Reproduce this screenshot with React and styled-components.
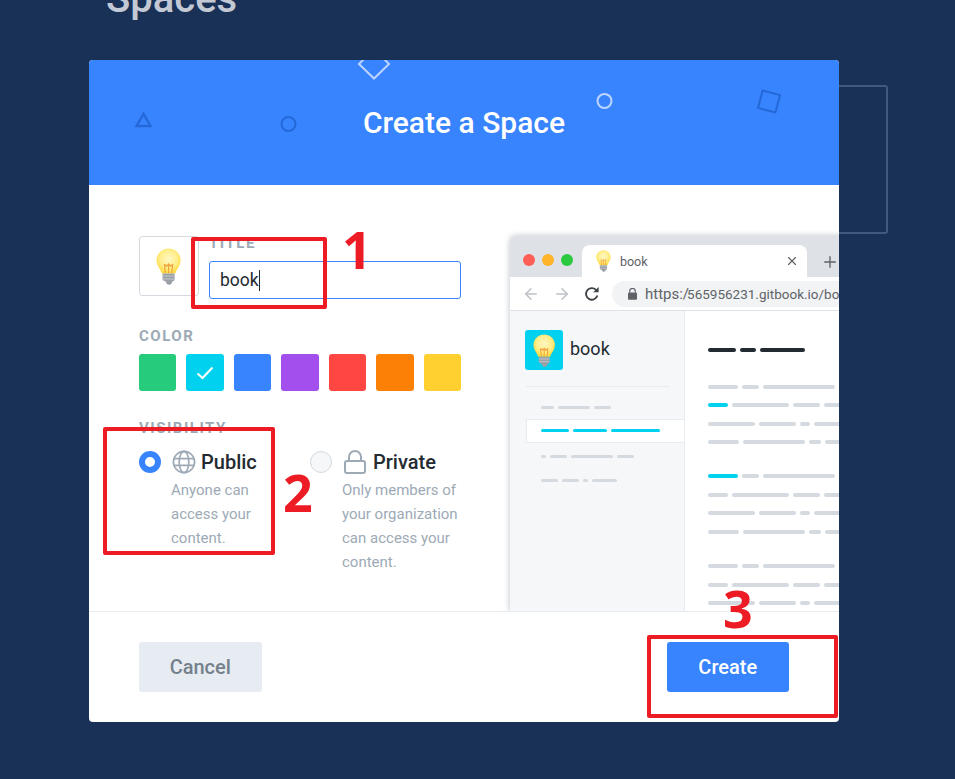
import React from 'react';
import styled, { createGlobalStyle } from 'styled-components';
import { ArrowLeft, ArrowRight, Plus, X } from 'lucide-react';

const GlobalStyle = createGlobalStyle`
  html, body {
    margin: 0;
    padding: 0;
    background: #1a3157;
  }
  body {
    font-family: Roboto, "Liberation Sans", sans-serif;
  }
`;

const Page = styled.div`
  position: relative;
  width: 955px;
  height: 779px;
  overflow: hidden;
  background: #1a3157;
`;

const Backdrop = styled.div`
  padding-left: 106px;
`;

const SpacesTitle = styled.h1`
  margin: -25px 0 0;
  font-size: 40px;
  line-height: 47px;
  font-weight: 500;
  color: #c3c9d4;
`;

const BackCard = styled.div`
  box-sizing: border-box;
  width: 782px;
  height: 149px;
  margin-top: 63px;
  border: 2px solid #42587c;
  border-radius: 3px;
`;

const Modal = styled.div`
  position: absolute;
  left: 89px;
  top: 60px;
  width: 750px;
  height: 662px;
  display: flex;
  flex-direction: column;
  background: #fff;
  border-radius: 4px;
  overflow: hidden;
`;

const Header = styled.header`
  position: relative;
  flex: none;
  height: 125px;
  display: flex;
  align-items: center;
  justify-content: center;
  background: #3884ff;
`;

const HeaderTitle = styled.h2`
  margin: 0;
  font-size: 30px;
  font-weight: 500;
  color: #fff;
`;

const Decor = styled.svg`
  position: absolute;
  left: 0;
  top: 0;
  pointer-events: none;
`;

const Body = styled.div`
  flex: 1;
  display: flex;
  gap: 49px;
  padding: 51px 0 0 50px;
  overflow: hidden;
`;

const FormColumn = styled.div`
  flex: none;
  width: 322px;
`;

const TitleRow = styled.div`
  display: flex;
  gap: 10px;
`;

const IconBox = styled.div`
  box-sizing: border-box;
  flex: none;
  width: 60px;
  height: 60px;
  display: flex;
  align-items: center;
  justify-content: center;
  border: 1px solid #d4dadf;
  border-radius: 3px;
`;

const TitleField = styled.div`
  flex: 1;
`;

const Label = styled.div`
  font-size: 15px;
  line-height: 16px;
  font-weight: 700;
  letter-spacing: 1.5px;
  color: #9daab6;
  margin-top: ${(p) => p.$top || 0}px;
`;

const TitleInput = styled.div`
  box-sizing: border-box;
  height: 38px;
  margin-top: 10px;
  padding: 0 10px;
  display: flex;
  align-items: center;
  border: 1px solid #3884ff;
  border-radius: 3px;
  font-size: 17.5px;
  color: #242a31;
`;

const Caret = styled.span`
  width: 1px;
  height: 21px;
  background: #242a31;
`;

const Swatches = styled.div`
  display: grid;
  grid-template-columns: repeat(7, 1fr);
  gap: 10px;
  margin-top: 10px;
`;

const Swatch = styled.div`
  height: 37px;
  display: flex;
  align-items: center;
  justify-content: center;
  border-radius: 3px;
  background: ${(p) => p.$color};
`;

const Options = styled.div`
  display: flex;
  margin-top: 15px;
`;

const Option = styled.div`
  flex: none;
  width: ${(p) => p.$width}px;
  display: flex;
  gap: 10px;
`;

const Radio = styled.div`
  box-sizing: border-box;
  flex: none;
  width: 22px;
  height: 22px;
  border-radius: 50%;
  border: ${(p) => (p.$checked ? '6px solid #3884ff' : '1px solid #d4dadf')};
  background: ${(p) => (p.$checked ? '#fff' : '#f5f7f9')};
`;

const OptionText = styled.div`
  min-width: 0;
`;

const OptionHead = styled.div`
  display: flex;
  align-items: center;
  gap: 5px;
  height: 22px;
  margin-left: 1px;
  font-size: 20px;
  font-weight: 500;
  color: #242a31;
`;

const OptionDesc = styled.p`
  margin: 5px 0 0;
  font-size: 15px;
  line-height: 24px;
  color: #9daab6;
`;

const Preview = styled.div`
  flex: none;
  width: 400px;
  height: 375px;
  border-radius: 6px 0 0 0;
  overflow: hidden;
  box-shadow: 0 0 6px rgba(60, 75, 100, 0.35);
  background: #fff;
`;

const TabBar = styled.div`
  height: 41px;
  display: flex;
  align-items: flex-end;
  background: #dee1e6;
`;

const Dots = styled.div`
  width: 72px;
  height: 41px;
  display: flex;
  align-items: center;
  gap: 7px;
  padding: 7px 0 0 13px;
  box-sizing: border-box;
`;

const Dot = styled.span`
  width: 12px;
  height: 12px;
  border-radius: 50%;
  background: ${(p) => p.$color};
`;

const Tab = styled.div`
  box-sizing: border-box;
  width: 225px;
  height: 32px;
  display: flex;
  align-items: center;
  gap: 9px;
  padding: 0 8px 0 14px;
  background: #fff;
  border-radius: 8px 8px 0 0;
  font-size: 12.5px;
  color: #5f6368;
`;

const TabTitle = styled.span`
  flex: 1;
`;

const NewTab = styled.div`
  padding: 0 0 6px 14px;
  display: flex;
  color: #5f6368;
`;

const AddressBar = styled.div`
  box-sizing: border-box;
  height: 34px;
  display: flex;
  align-items: center;
  border-bottom: 1px solid #dee1e6;
  padding-left: 12px;
  gap: 13px;
`;

const UrlPill = styled.div`
  flex: none;
  width: 260px;
  height: 26px;
  margin-left: -1px;
  padding-left: 16px;
  display: flex;
  align-items: center;
  gap: 8px;
  white-space: nowrap;
  background: #f1f3f4;
  border-radius: 13px 0 0 13px;
  font-size: 15px;
  color: #5f6368;
`;

const UrlRest = styled.span`
  margin-left: -10px;
  font-size: 13.5px;
`;

const Site = styled.div`
  display: flex;
  height: 300px;
`;

const Sidebar = styled.aside`
  box-sizing: border-box;
  flex: none;
  width: 175px;
  padding: 19px 0 0 15px;
  background: #f5f7f9;
  border-right: 1px solid #e6ecf1;
`;

const Brand = styled.div`
  display: flex;
  align-items: center;
  gap: 7px;
  font-size: 18px;
  color: #242a31;
`;

const BrandName = styled.span`
  margin-top: -4px;
`;

const BrandIcon = styled.div`
  width: 38px;
  height: 40px;
  display: flex;
  align-items: center;
  justify-content: center;
  border-radius: 3px;
  background: #00d1ee;
`;

const SideDivider = styled.div`
  width: 144px;
  height: 1px;
  margin: 16px 0 0 1px;
  background: #e6ecf1;
`;

const SideItem = styled.div`
  box-sizing: border-box;
  height: 24px;
  display: flex;
  align-items: center;
  gap: 4px;
  margin: 0 0 ${(p) => (p.$active ? 1 : 0)}px 1px;
  padding: 0 0 ${(p) => (p.$active ? 2 : 0)}px 14px;
  background: ${(p) => (p.$active ? '#fff' : 'transparent')};
  border: 1px solid ${(p) => (p.$active ? '#e6ecf1' : 'transparent')};
  border-right: 0;
`;

const SideItems = styled.div`
  margin-top: 8px;
`;

const Article = styled.div`
  flex: 1;
  min-width: 0;
  padding: 37px 0 0 23px;
  overflow: hidden;
`;

const LineRow = styled.div`
  display: flex;
  align-items: center;
  gap: 4px;
  height: 4px;
  margin-top: ${(p) => p.$top}px;
`;

const Bar = styled.span`
  flex: none;
  height: ${(p) => p.$h || 4}px;
  width: ${(p) => p.$w}px;
  border-radius: 2px;
  background: ${(p) => p.$color || '#d4dadf'};
`;

const Footer = styled.footer`
  box-sizing: border-box;
  flex: none;
  height: 111px;
  display: flex;
  justify-content: space-between;
  padding: 30px 50px 0;
  border-top: 1px solid #e6ecf1;
`;

const Button = styled.button`
  width: 122.5px;
  height: 50px;
  border: 0;
  border-radius: 3px;
  font-family: inherit;
  font-size: 20px;
  font-weight: 500;
  color: ${(p) => (p.$primary ? '#fff' : '#74818d')};
  background: ${(p) => (p.$primary ? '#3884ff' : '#e6ecf1')};
`;

const Callout = styled.div`
  position: absolute;
  box-sizing: border-box;
  left: ${(p) => p.$x}px;
  top: ${(p) => p.$y}px;
  width: ${(p) => p.$w}px;
  height: ${(p) => p.$h}px;
  border: 4.5px solid #ed1c24;
  border-radius: 2px;
`;

const CalloutNumber = styled.div`
  position: absolute;
  left: ${(p) => p.$x}px;
  top: ${(p) => p.$y}px;
  font-family: "Open Sans", sans-serif;
  font-size: 52px;
  line-height: 52px;
  font-weight: 700;
  color: #ed1c24;
`;

const swatches = ['#26cb7c', '#00d1ee', '#3884ff', '#a34fee', '#ff4642', '#fb8005', '#ffd030'];

const sideRows = [
  { bars: [13, 32, 17] },
  { bars: [28, 34, 49], active: true },
  { bars: [5, 17, 42, 17] },
  { bars: [17, 17, 5, 25] },
];

const CYAN = '#00d1ee';

const paragraph = (lead, leadW) => [
  [[30, lead === 0 ? leadW : 0], 17, 72],
  [[20, lead === 1 ? leadW : 0], 57, 27, 30],
  [47, 37, 10, 30],
  [31, 62, 12, 30],
];

const Bulb = ({ size = 37, id }) => (
  <svg width={size * 0.68} height={size} viewBox="0 0 25 37">
    <defs>
      <radialGradient id={id} cx="50%" cy="42%" r="60%">
        <stop offset="0%" stopColor="#fff7c4" />
        <stop offset="60%" stopColor="#ffee8a" />
        <stop offset="100%" stopColor="#fdd835" />
      </radialGradient>
    </defs>
    <path
      d="M12.5 0.5C5.8 0.5 0.5 5.6 0.5 12.2c0 5.8 4.2 8.8 5.4 13.3h13.2c1.2-4.5 5.4-7.5 5.4-13.3C24.5 5.6 19.2 0.5 12.5 0.5z"
      fill={`url(#${id})`}
    />
    <path
      d="M9.4 25 8.3 16.2M15.6 25l1.1-8.8M12.5 25v-9M8.3 16.2l2.2 2 2-2.2 2 2.2 2.2-2"
      fill="none"
      stroke="#f0a23c"
      strokeWidth="1.2"
    />
    <path d="M6.5 25.5h12v6c0 1-1 1.6-2 1.8l-1 2.2a3 3 0 0 1-5 0l-1-2.2c-1-.2-3-.8-3-1.8z" fill="#9aa0a6" />
    <path d="M6.5 28h12M6.5 31h12" stroke="#c4c8cc" strokeWidth="1" />
  </svg>
);

const GlobeIcon = () => (
  <svg width="24" height="24" viewBox="0 0 24 24" fill="none" stroke="#9daab6" strokeWidth="1.7">
    <circle cx="12" cy="12" r="10.6" />
    <ellipse cx="12" cy="12" rx="4.8" ry="10.6" />
    <path d="M1.8 8.6h20.4M1.8 15.4h20.4" />
  </svg>
);

const PadlockIcon = () => (
  <svg width="25" height="24" viewBox="-1 0 25 24" fill="none" stroke="#9daab6" strokeWidth="2">
    <rect x="1" y="11" width="20" height="12" rx="2" />
    <path d="M5 11V7a6 6 0 0 1 12 0v4" />
  </svg>
);

const ReloadIcon = () => (
  <svg width="16" height="16" viewBox="0 0 16 16" fill="none">
    <path d="M13.4 9.6A5.8 5.8 0 1 1 12 3.9" stroke="#3c4043" strokeWidth="1.8" />
    <path d="M14.6 0.9v5.4H9.2z" fill="#3c4043" />
  </svg>
);

const SmallLock = () => (
  <svg width="9" height="12" viewBox="0 0 9 12">
    <path d="M1.7 4.6V3.2a2.8 2.8 0 0 1 5.6 0v1.4" fill="none" stroke="#5f6368" strokeWidth="1.2" />
    <rect x="0" y="4.4" width="9" height="7.4" rx="1" fill="#5f6368" />
  </svg>
);

const HeaderShapes = () => (
  <Decor width="750" height="125" viewBox="0 0 750 125" fill="none" strokeWidth="2">
    <path d="M54.5 54 47.5 66h14z" stroke="#2468d8" strokeWidth="2.4" />
    <circle cx="199.5" cy="64" r="7" stroke="#2468d8" />
    <path d="M285 -11 300 4 285 18.5 270 4z" stroke="#bcd4ff" />
    <circle cx="515.5" cy="41" r="7" stroke="#bcd4ff" />
    <rect x="671" y="32.5" width="18" height="18" stroke="#2468d8" transform="rotate(15 680 41.5)" />
  </Decor>
);

const App = () => {
  return (
    <Page>
      <GlobalStyle />
      <Backdrop>
        <SpacesTitle>Spaces</SpacesTitle>
        <BackCard />
      </Backdrop>

      <Modal>
        <Header>
          <HeaderShapes />
          <HeaderTitle>Create a Space</HeaderTitle>
        </Header>

        <Body>
          <FormColumn>
            <TitleRow>
              <IconBox>
                <Bulb id="bulb-form" />
              </IconBox>
              <TitleField>
                <Label $top={-1}>TITLE</Label>
                <TitleInput>
                  book
                  <Caret />
                </TitleInput>
              </TitleField>
            </TitleRow>

            <Label $top={29}>COLOR</Label>
            <Swatches>
              {swatches.map((color, i) => (
                <Swatch key={color} $color={color}>
                  {i === 1 && (
                    <svg width="18" height="14" viewBox="0 0 18 14" fill="none" stroke="#fff" strokeWidth="2">
                      <path d="M1.5 7.5 6.5 12 16.5 1.5" />
                    </svg>
                  )}
                </Swatch>
              ))}
            </Swatches>

            <Label $top={29}>VISIBILITY</Label>
            <Options>
              <Option $width={171}>
                <Radio $checked />
                <OptionText>
                  <OptionHead>
                    <GlobeIcon />
                    Public
                  </OptionHead>
                  <OptionDesc>
                    Anyone can
                    <br />
                    access your
                    <br />
                    content.
                  </OptionDesc>
                </OptionText>
              </Option>
              <Option $width={151}>
                <Radio />
                <OptionText>
                  <OptionHead>
                    <PadlockIcon />
                    Private
                  </OptionHead>
                  <OptionDesc>
                    Only members of
                    <br />
                    your organization
                    <br />
                    can access your
                    <br />
                    content.
                  </OptionDesc>
                </OptionText>
              </Option>
            </Options>
          </FormColumn>

          <Preview>
            <TabBar>
              <Dots>
                <Dot $color="#ff5f57" />
                <Dot $color="#ffb429" />
                <Dot $color="#2bc93f" />
              </Dots>
              <Tab>
                <Bulb size={22} id="bulb-tab" />
                <TabTitle>book</TabTitle>
                <X size={14} strokeWidth={2} />
              </Tab>
              <NewTab>
                <Plus size={18} strokeWidth={1.8} />
              </NewTab>
            </TabBar>
            <AddressBar>
              <ArrowLeft size={18} color="#bdc1c6" strokeWidth={2} />
              <ArrowRight size={18} color="#bdc1c6" strokeWidth={2} />
              <ReloadIcon />
              <UrlPill>
                <SmallLock />
                <span>https:/</span>
                <UrlRest>565956231.gitbook.io/book</UrlRest>
              </UrlPill>
            </AddressBar>
            <Site>
              <Sidebar>
                <Brand>
                  <BrandIcon>
                    <Bulb size={33} id="bulb-brand" />
                  </BrandIcon>
                  <BrandName>book</BrandName>
                </Brand>
                <SideDivider />
                <SideItems>
                  {sideRows.map((row, i) => (
                    <SideItem key={i} $active={row.active}>
                      {row.bars.map((w, j) => (
                        <Bar key={j} $w={w} $h={3} $color={row.active ? CYAN : undefined} />
                      ))}
                    </SideItem>
                  ))}
                </SideItems>
              </Sidebar>
              <Article>
                <LineRow $top={0}>
                  <Bar $w={28} $color="#242a31" />
                  <Bar $w={16} $color="#242a31" />
                  <Bar $w={45} $color="#242a31" />
                </LineRow>
                {[
                  [1, 20, 32.5],
                  [0, 30, 30],
                  [-1, 0, 30],
                ].map(([lead, leadW, top], p) =>
                  paragraph(lead, leadW).map((row, r) => (
                    <LineRow key={`${p}-${r}`} $top={r === 0 ? top : 14.6}>
                      {row.map((cell, c) =>
                        Array.isArray(cell) ? (
                          <Bar key={c} $w={cell[0]} $color={cell[1] ? CYAN : undefined} />
                        ) : (
                          <Bar key={c} $w={cell} />
                        )
                      )}
                    </LineRow>
                  ))
                )}
              </Article>
            </Site>
          </Preview>
        </Body>

        <Footer>
          <Button>Cancel</Button>
          <Button $primary>Create</Button>
        </Footer>
      </Modal>

      <Callout $x={191} $y={237} $w={136} $h={72} />
      <Callout $x={103} $y={427} $w={172} $h={128} />
      <Callout $x={647} $y={635} $w={191} $h={83} />
      <CalloutNumber $x={342} $y={223}>1</CalloutNumber>
      <CalloutNumber $x={283} $y={466}>2</CalloutNumber>
      <CalloutNumber $x={723} $y={582}>3</CalloutNumber>
    </Page>
  );
};

export default App;
